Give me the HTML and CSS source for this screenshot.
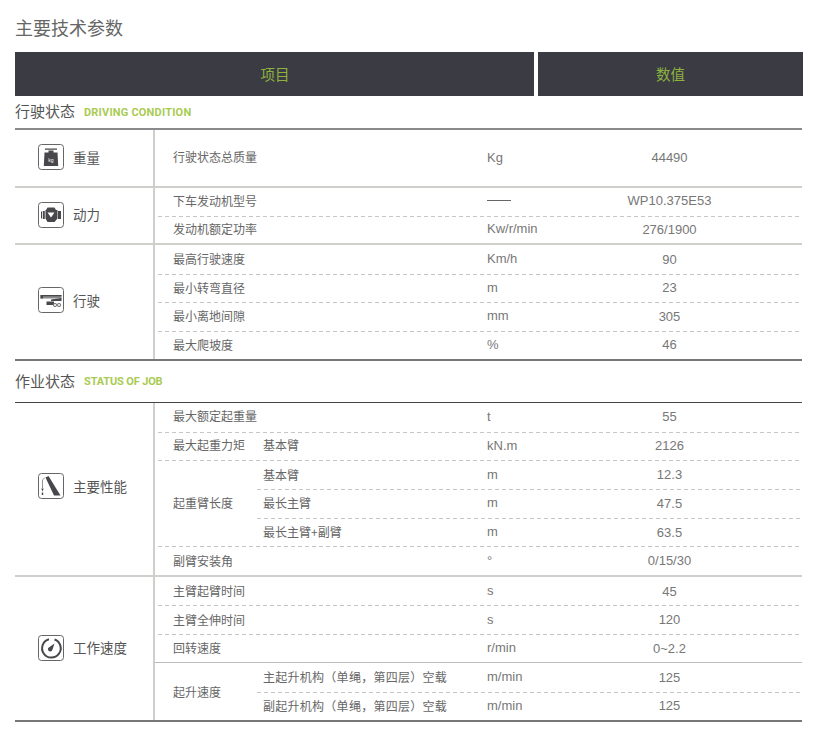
FILE: index.html
```html
<!DOCTYPE html>
<html lang="zh">
<head>
<meta charset="utf-8">
<title>主要技术参数</title>
<link rel="stylesheet" href="styles.css">
</head>
<body>
<main class="page">
  <h1 class="title">主要技术参数</h1>
  <div class="head">
    <div class="head-cell head-item">项目</div>
    <div class="head-cell head-value">数值</div>
  </div>

  <h2 class="section section-a"><span>行驶状态</span><em>DRIVING CONDITION</em></h2>
  <div class="table table-a">
    <section class="group g-weight">
      <div class="label">
        <svg class="icon" viewBox="0 0 26 26"><rect class="box" x=".5" y=".5" width="25" height="25" rx="3"/><path class="solid" d="M7 4.500h12v1.300H7zM10.500 6.500h5v2h-5zM6.500 8.500h13l.7 13.500H5.800z"/><text class="kg" x="13" y="17.500">kg</text></svg>
        <span>重量</span>
      </div>
      <div class="rows">
        <div class="row first"><div class="name">行驶状态总质量</div><div class="unit">Kg</div><div class="val">44490</div></div>
      </div>
    </section>
    <section class="group g-power">
      <div class="label">
        <svg class="icon" viewBox="0 0 26 26"><rect class="box" x=".5" y=".5" width="25" height="25" rx="3"/><path class="solid" d="M3 9.500h1v7H3zM4.800 9h2v8h-2zM20 9h3v8h-3zM8 8l1.500-2.500h7L18 8h1.500v8.500L16.500 20h-7L7.500 16.500V8z"/><path class="cut" d="M9.500 10.500h7L13 15.500z"/></svg>
        <span>动力</span>
      </div>
      <div class="rows">
        <div class="row first"><div class="name">下车发动机型号</div><div class="unit"><i class="dash"></i></div><div class="val">WP10.375E53</div></div>
        <div class="row"><div class="name">发动机额定功率</div><div class="unit">Kw/r/min</div><div class="val">276/1900</div></div>
      </div>
    </section>
    <section class="group g-drive end">
      <div class="label">
        <svg class="icon" viewBox="0 0 26 26"><rect class="box" x=".5" y=".5" width="25" height="25" rx="3"/><path class="grey" d="M2.500 8h21v3.500H2.500z"/><path class="solid" d="M2.500 8H5v3.500H2.500zM5 8h18.500v1.200H5zM13 12.500l10.500-1.500v3H13zM8.500 14.500H16V18H8.500z"/><circle class="wheel" cx="17" cy="18" r="1.700"/><circle class="wheel" cx="21" cy="18" r="1.700"/></svg>
        <span>行驶</span>
      </div>
      <div class="rows">
        <div class="row"><div class="name">最高行驶速度</div><div class="unit">Km/h</div><div class="val">90</div></div>
        <div class="row"><div class="name">最小转弯直径</div><div class="unit">m</div><div class="val">23</div></div>
        <div class="row"><div class="name">最小离地间隙</div><div class="unit">mm</div><div class="val">305</div></div>
        <div class="row"><div class="name">最大爬坡度</div><div class="unit">%</div><div class="val">46</div></div>
      </div>
    </section>
  </div>

  <h2 class="section section-b"><span>作业状态</span><em>STATUS OF JOB</em></h2>
  <div class="table table-b">
    <section class="group g-perf">
      <div class="label">
        <svg class="icon" viewBox="0 0 26 26"><rect class="box" x=".5" y=".5" width="25" height="25" rx="3"/><path class="solid" d="M7.500 4.500l3-1.500 12 19.500h-6.500z"/><path class="line" d="M7 4.500L4.500 7v8"/><path class="solid" d="M3.300 15.500h2.400l-1.200 3zM3.800 19.500h1.400v2.500h-1.400z"/></svg>
        <span>主要性能</span>
      </div>
      <div class="rows">
        <div class="row first"><div class="name">最大额定起重量</div><div class="unit">t</div><div class="val">55</div></div>
        <div class="row split first"><div class="name">最大起重力矩</div><div class="subs"><div class="sub"><div class="subname">基本臂</div><div class="unit">kN.m</div><div class="val">2126</div></div></div></div>
        <div class="row split triple"><div class="name">起重臂长度</div>
          <div class="subs">
            <div class="sub"><div class="subname">基本臂</div><div class="unit">m</div><div class="val">12.3</div></div>
            <div class="sub"><div class="subname">最长主臂</div><div class="unit">m</div><div class="val">47.5</div></div>
            <div class="sub"><div class="subname">最长主臂+副臂</div><div class="unit">m</div><div class="val">63.5</div></div>
          </div>
        </div>
        <div class="row"><div class="name">副臂安装角</div><div class="unit">°</div><div class="val">0/15/30</div></div>
      </div>
    </section>
    <section class="group g-speed end">
      <div class="label">
        <svg class="icon" viewBox="0 0 26 26"><rect class="box" x=".5" y=".5" width="25" height="25" rx="3"/><path class="ring" d="M16.500 4.500a9.300 9.300 0 1 1-5.500-.2"/><path class="solid" d="M16.500 8.500l-2 6a2.300 2.300 0 1 1-3-2.500z"/></svg>
        <span>工作速度</span>
      </div>
      <div class="rows">
        <div class="row"><div class="name">主臂起臂时间</div><div class="unit">s</div><div class="val">45</div></div>
        <div class="row"><div class="name">主臂全伸时间</div><div class="unit">s</div><div class="val">120</div></div>
        <div class="row"><div class="name">回转速度</div><div class="unit">r/min</div><div class="val">0~2.2</div></div>
        <div class="row split double solid-top"><div class="name">起升速度</div>
          <div class="subs">
            <div class="sub"><div class="subname wide">主起升机构（单绳，第四层）空载</div><div class="unit">m/min</div><div class="val">125</div></div>
            <div class="sub"><div class="subname wide">副起升机构（单绳，第四层）空载</div><div class="unit">m/min</div><div class="val">125</div></div>
          </div>
        </div>
      </div>
    </section>
  </div>
</main>
</body>
</html>
```

FILE: styles.css
```css
* { box-sizing: border-box; }
html, body { margin: 0; padding: 0; background: #fff; }
body {
  font-family: "Liberation Sans", "Noto Sans CJK SC", sans-serif;
  color: #666;
}
.page { width: 822px; height: 740px; padding: 0 19px 0 15px; overflow: hidden; }

.title {
  margin: 0;
  height: 52px;
  padding-top: 2px;
  display: flex;
  align-items: center;
  font: 400 18px "Noto Sans CJK SC", sans-serif;
  color: #666;
}

.head { display: flex; gap: 4px; height: 44px; width: 788px; }
.head-cell {
  display: flex;
  align-items: center;
  justify-content: center;
  padding-bottom: 2px;
  background: #3a3b43;
  color: #8fb23e;
  font: 400 14.500px "Noto Sans CJK SC", sans-serif;
}
.head-item { width: 519px; padding-left: 1px; }
.head-value { width: 265px; }

.section {
  margin: 0;
  display: flex;
  align-items: center;
  gap: 9px;
  font: 400 15px "Noto Sans CJK SC", sans-serif;
  color: #555;
}
.section span { padding-bottom: 3px; }
.section-a { height: 32px; }
.section-b { height: 41px; }
.section em {
  font: 700 11px "Liberation Sans Narrow", Roboto, sans-serif;
  font-style: normal;
  color: #a9cb52;
  letter-spacing: .2px;
}
.section-b em { letter-spacing: -.15px; }

.table { width: 787px; }
.table-a { border-top: 2px solid #8a8a8c; }
.table-b { border-top: 1px solid #444; }

.group { display: flex; border-bottom: 2px solid #cfcfcb; }
.group.end { border-bottom-color: #77777a; }
.g-weight { height: 58px; }
.g-power { height: 57px; }
.g-drive { height: 116px; }
.g-perf { height: 174px; }
.g-speed { height: 145px; }

.label {
  width: 138px;
  flex: none;
  display: flex;
  align-items: center;
  gap: 9px;
  padding: 0 0 2px 23px;
  font: 400 13.500px "Noto Sans CJK SC", sans-serif;
  color: #555;
}
.g-perf .label { padding-bottom: 6px; }
.g-drive .label { padding-bottom: 4px; }
.g-speed .label { padding-bottom: 2px; }
.label span { padding-bottom: 1px; }
.icon { width: 26px; height: 26px; flex: none; }
.box { fill: #fff; stroke: #666; stroke-width: 1; }
.solid { fill: #48484c; }
.grey { fill: #8a8a8c; }
.cut { fill: #fff; }
.wheel { fill: #ddd; stroke: #666; stroke-width: .8; }
.line { fill: none; stroke: #777; stroke-width: .8; }
.ring { fill: none; stroke: #48484c; stroke-width: 2; }
.kg { fill: #fff; font: 5px "Liberation Sans", sans-serif; text-anchor: middle; }

.rows {
  flex: 1;
  display: flex;
  flex-direction: column;
  border-left: 2px solid #cfcfcb;
  padding-left: 3px;
}
.row {
  flex: 1 1 0;
  display: flex;
  align-items: center;
  font: 400 12px "Noto Sans CJK SC", sans-serif;
  color: #666;
}
.row + .row, .sub + .sub {
  background: repeating-linear-gradient(90deg, #c6c6c6 0 4px, transparent 4px 7px) top left / 100% 1px no-repeat;
}
.triple { flex-grow: 3; }
.double { flex-grow: 2; }
.row.solid-top { background: none; border-top: 1px solid #bbb; margin-left: -3px; padding-left: 3px; }

.name { width: 329px; padding: 0 0 1px 15px; flex: none; }
.unit {
  width: 51px;
  flex: none;
  padding-bottom: 1px;
  font: 13px "Liberation Sans", sans-serif;
  color: #777;
  white-space: nowrap;
}
.val {
  flex: 1;
  text-align: center;
  padding: 0 1px 0 0;
  font: 13px "Liberation Sans", sans-serif;
  color: #777;
}
.first .name, .first .subname { padding-bottom: 3px; }
.first .unit, .first .val { padding-bottom: 2px; }
.dash { display: block; width: 24px; height: 1px; background: #666; }

.split .name { width: 99px; }
.subs { flex: 1; align-self: stretch; display: flex; flex-direction: column; }
.sub { flex: 1 1 0; display: flex; align-items: center; }
.subname { width: 230px; padding: 0 0 1px 6px; flex: none; white-space: nowrap; }
.wide { letter-spacing: .27px; text-spacing-trim: space-all; }
```
